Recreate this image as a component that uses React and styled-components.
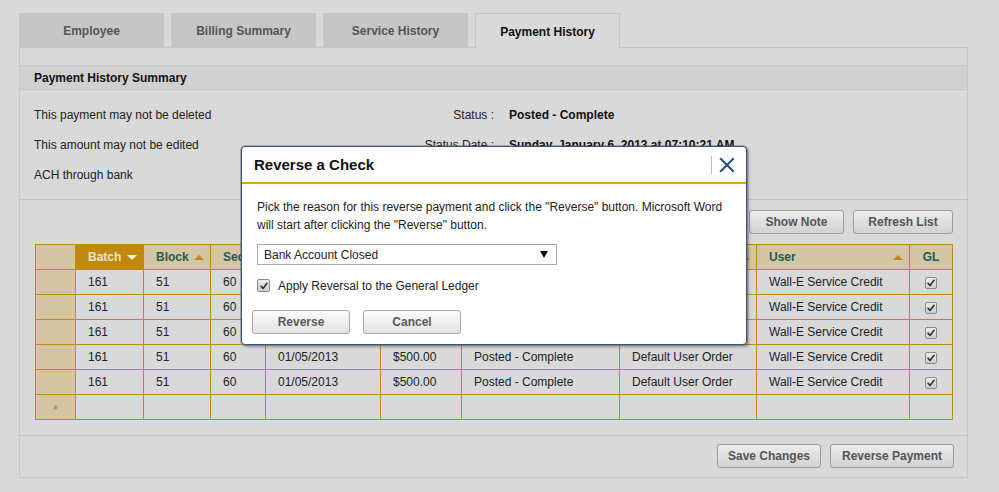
import React from "react";
import styled, { createGlobalStyle, css } from "styled-components";

const Global = createGlobalStyle`
  html, body { margin: 0; padding: 0; background: #d9d9d9; }
  body { font-family: "Liberation Sans", Arial, sans-serif; font-size: 12px; color: #222; }
  * { box-sizing: border-box; }
`;

const Page = styled.div`
  position: relative;
  padding: 13px 0 0 19px;
  width: 999px;
  height: 492px;
`;

const Tabs = styled.div`
  display: flex;
  gap: 7px;
  height: 34px;
`;

const Tab = styled.div`
  width: 145px;
  height: 34px;
  display: flex;
  align-items: center;
  justify-content: center;
  padding-top: 2px;
  font-weight: bold;
  font-size: 12px;
  color: #555;
  background: #c6c6c6;
  ${(p) =>
    p.$active &&
    css`
      background: #d9d9d9;
      color: #111;
      border: 1px solid #c6c6c6;
      border-bottom: none;
      height: 35px;
      position: relative;
      z-index: 1;
    `}
`;

const Panel = styled.div`
  width: 949px;
  border: 1px solid #c8c8c8;
  background: #d9d9d9;
`;

const TopSpacer = styled.div`
  height: 17px;
`;

const SummaryHeader = styled.div`
  height: 25px;
  border-top: 1px solid #c6c6c6;
  border-bottom: 1px solid #c6c6c6;
  background: #d0d0d0;
  padding: 1px 0 0 14px;
  line-height: 22px;
  font-weight: bold;
  color: #111;
`;

const Info = styled.div`
  display: grid;
  grid-template-columns: 360px 100px 1fr;
  grid-auto-rows: 30px;
  align-items: center;
  padding: 10px 14px 9px;
`;

const InfoText = styled.div``;

const InfoLabel = styled.div`
  text-align: right;
`;

const InfoValue = styled.div`
  padding-left: 15px;
  font-weight: bold;
  color: #111;
`;

const ListSection = styled.div`
  border-top: 1px solid #c6c6c6;
  padding: 10px 14px 15px 15px;
`;

const ButtonRow = styled.div`
  display: flex;
  justify-content: flex-end;
  gap: ${(p) => p.$gap || 9}px;
`;

const Button = styled.button`
  width: ${(p) => p.$w}px;
  height: ${(p) => p.$h || 24}px;
  border: 1px solid #9c9c9c;
  border-radius: 3px;
  background: linear-gradient(#ececec, #d2d2d2);
  font-family: "Liberation Sans", Arial, sans-serif;
  font-size: 12px;
  font-weight: bold;
  color: #555;
  padding: 0;
  cursor: pointer;
`;

const DialogButton = styled(Button)`
  border-color: #aaa;
  background: linear-gradient(#fbfbfb, #e3e3e3);
  color: #5a5a5a;
`;

const Grid = styled.table`
  margin-top: 10px;
  border-collapse: collapse;
  table-layout: fixed;
  width: 918px;
`;

const HeadCell = styled.th`
  height: 25px;
  padding: 0 6px 0 12px;
  border: 1px solid #c08a12;
  background: ${(p) => (p.$active ? "#c0880c" : "#d4c6a4")};
  color: ${(p) => (p.$active ? "#ede3cb" : "#1f5d50")};
  font-weight: bold;
  font-size: 12px;
  text-align: left;
  ${(p) => p.$center && css`text-align: center; padding: 0;`}
`;

const HeadInner = styled.div`
  display: flex;
  align-items: center;
  justify-content: space-between;
  white-space: nowrap;
  overflow: hidden;
`;

const SortArrow = styled.span`
  width: 0;
  height: 0;
  border-left: 5px solid transparent;
  border-right: 5px solid transparent;
  ${(p) =>
    p.$down
      ? css`border-top: 5px solid #f4efe4;`
      : css`border-bottom: 5px solid #c08a12;`}
`;

const RowHead = styled.td`
  height: 25px;
  border: 1px solid #c08a12;
  background: #d4c6a4;
  text-align: center;
  color: #c08a12;
  font-size: 13px;
  padding: 4px 0 0;
`;

const Cell = styled.td`
  height: 25px;
  border: 1px solid #c08a12;
  padding: 0 6px 0 12px;
  white-space: nowrap;
  overflow: hidden;
  color: #222;
  ${(p) => p.$center && css`text-align: center; padding: 0;`}
`;

const Footer = styled.div`
  border-top: 1px solid #c6c6c6;
  padding: 8px 13px 9px 14px;
`;

const CheckBox = styled.span`
  display: inline-flex;
  align-items: center;
  justify-content: center;
  width: ${(p) => p.$size || 12}px;
  height: ${(p) => p.$size || 12}px;
  border: 1px solid #8a8a8a;
  border-radius: 2px;
  background: linear-gradient(#ececec, #cdcdcd);
  vertical-align: middle;
`;

const Check = ({ size }) => (
  <CheckBox $size={size}>
    <svg width="8" height="8" viewBox="0 0 9 9">
      <path d="M1.2 4.8 L3.4 7.2 L7.9 1.5" fill="none" stroke="#333" strokeWidth="1.9" strokeLinejoin="round" strokeLinecap="round" />
    </svg>
  </CheckBox>
);

const Dialog = styled.div`
  position: absolute;
  left: 241px;
  top: 146px;
  width: 506px;
  height: 199px;
  background: #fff;
  border: 1px solid #37577f;
  border-radius: 4px;
  box-shadow: 0 0 0 1px rgba(70, 70, 70, 0.35), 2px 2px 3px rgba(0, 0, 0, 0.3);
  z-index: 5;
`;

const DialogTitleBar = styled.div`
  height: 37px;
  border-bottom: 2px solid #e2a20c;
  display: flex;
  align-items: center;
  justify-content: space-between;
  padding-left: 12px;
`;

const DialogTitle = styled.div`
  font-size: 15px;
  font-weight: bold;
  color: #111;
`;

const CloseBox = styled.div`
  display: flex;
  align-items: center;
  height: 18px;
  border-left: 1px solid #a9bdd6;
  padding-left: 7px;
  margin-right: 11px;
`;

const DialogBody = styled.div`
  padding: 14px 16px 10px 15px;
`;

const DialogText = styled.p`
  margin: 0;
  line-height: 18px;
  color: #222;
`;

const FakeSelect = styled.div`
  margin-top: 10px;
  width: 300px;
  height: 21px;
  border: 1px solid #a9a9a9;
  background: #fff;
  display: flex;
  align-items: center;
  justify-content: space-between;
  padding: 0 8px 0 6px;
  color: #222;
`;

const SelectArrow = styled.span`
  width: 0;
  height: 0;
  border-left: 4px solid transparent;
  border-right: 4px solid transparent;
  border-top: 7px solid #111;
`;

const CheckRow = styled.label`
  margin-top: 11px;
  height: 19px;
  display: flex;
  align-items: center;
  gap: 8px;
  color: #222;
`;

const DialogButtons = styled.div`
  margin-top: 15px;
  margin-left: -5px;
  display: flex;
  gap: 13px;
`;

const columns = [40, 68, 67, 55, 115, 81, 158, 137, 153, 43];

const headers = [
  { label: "Batch", active: true, arrow: "down" },
  { label: "Block", arrow: "up" },
  { label: "Seq", arrow: "up" },
  { label: "Date", arrow: "up" },
  { label: "Amount", arrow: "up" },
  { label: "Status", arrow: "up" },
  { label: "Order Type", arrow: "up" },
  { label: "User", arrow: "up" },
];

const row = ["161", "51", "60", "01/05/2013", "$500.00", "Posted - Complete", "Default User Order", "Wall-E Service Credit"];
const rows = [row, row, row, row, row];

export default function App() {
  return (
    <>
      <Global />
      <Page>
        <Tabs>
          <Tab>Employee</Tab>
          <Tab>Billing Summary</Tab>
          <Tab>Service History</Tab>
          <Tab $active>Payment History</Tab>
        </Tabs>
        <Panel>
          <TopSpacer />
          <SummaryHeader>Payment History Summary</SummaryHeader>
          <Info>
            <InfoText>This payment may not be deleted</InfoText>
            <InfoLabel>Status :</InfoLabel>
            <InfoValue>Posted - Complete</InfoValue>
            <InfoText>This amount may not be edited</InfoText>
            <InfoLabel>Status Date :</InfoLabel>
            <InfoValue>Sunday, January 6, 2013 at 07:10:21 AM</InfoValue>
            <InfoText>ACH through bank</InfoText>
            <InfoLabel />
            <InfoValue />
          </Info>
          <ListSection>
            <ButtonRow>
              <Button $w={95}>Show Note</Button>
              <Button $w={100}>Refresh List</Button>
            </ButtonRow>
            <Grid>
              <colgroup>
                {columns.map((w, i) => (
                  <col key={i} style={{ width: w }} />
                ))}
              </colgroup>
              <thead>
                <tr>
                  <HeadCell />
                  {headers.map((h) => (
                    <HeadCell key={h.label} $active={h.active}>
                      <HeadInner>
                        <span>{h.label}</span>
                        <SortArrow $down={h.arrow === "down"} />
                      </HeadInner>
                    </HeadCell>
                  ))}
                  <HeadCell $center>GL</HeadCell>
                </tr>
              </thead>
              <tbody>
                {rows.map((r, i) => (
                  <tr key={i}>
                    <RowHead />
                    {r.map((v, j) => (
                      <Cell key={j}>{v}</Cell>
                    ))}
                    <Cell $center>
                      <Check />
                    </Cell>
                  </tr>
                ))}
                <tr>
                  <RowHead>*</RowHead>
                  {row.map((_, j) => (
                    <Cell key={j} />
                  ))}
                  <Cell />
                </tr>
              </tbody>
            </Grid>
          </ListSection>
          <Footer>
            <ButtonRow $gap={9}>
              <Button $w={104}>Save Changes</Button>
              <Button $w={124}>Reverse Payment</Button>
            </ButtonRow>
          </Footer>
        </Panel>

        <Dialog>
          <DialogTitleBar>
            <DialogTitle>Reverse a Check</DialogTitle>
            <CloseBox>
              <svg width="16" height="16" viewBox="0 0 16 16">
                <path d="M2 2 L14 14 M14 2 L2 14" stroke="#2c5283" strokeWidth="2.2" strokeLinecap="square" />
              </svg>
            </CloseBox>
          </DialogTitleBar>
          <DialogBody>
            <DialogText>
              Pick the reason for this reverse payment and click the "Reverse" button. Microsoft Word
              <br />
              will start after clicking the "Reverse" button.
            </DialogText>
            <FakeSelect>
              <span>Bank Account Closed</span>
              <SelectArrow />
            </FakeSelect>
            <CheckRow>
              <Check size={13} />
              <span>Apply Reversal to the General Ledger</span>
            </CheckRow>
            <DialogButtons>
              <DialogButton $w={98}>Reverse</DialogButton>
              <DialogButton $w={98}>Cancel</DialogButton>
            </DialogButtons>
          </DialogBody>
        </Dialog>
      </Page>
    </>
  );
}
